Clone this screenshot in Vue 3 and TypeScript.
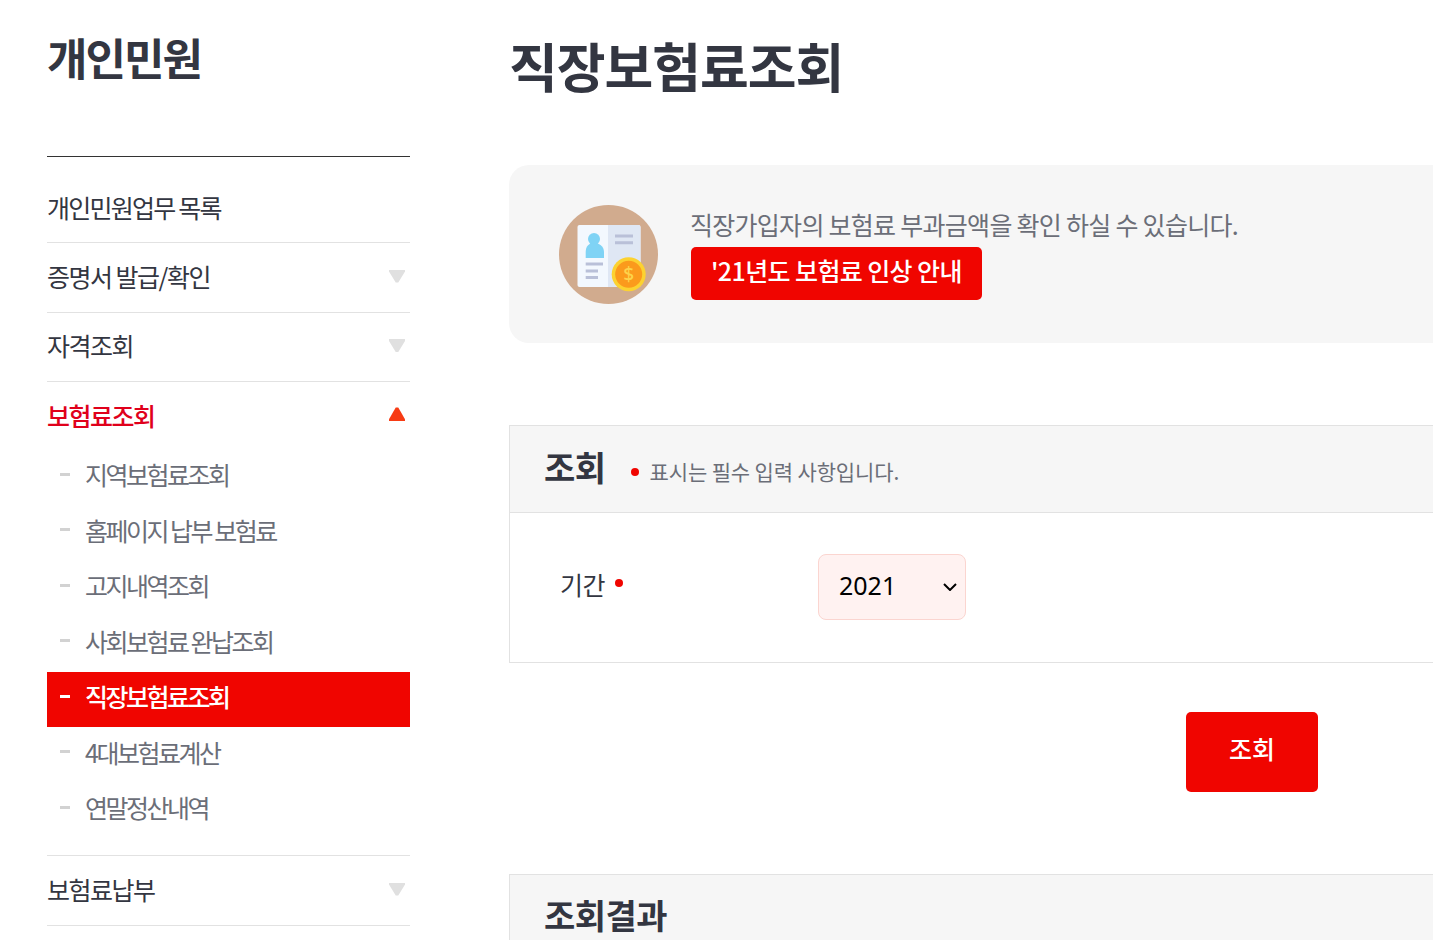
<script setup lang="ts">
type MenuItem = { label: string; arrow?: boolean }

const topItems: MenuItem[] = [
  { label: '개인민원업무 목록' },
  { label: '증명서 발급/확인', arrow: true },
  { label: '자격조회', arrow: true },
]
const subItems = [
  '지역보험료조회',
  '홈페이지 납부 보험료',
  '고지내역조회',
  '사회보험료 완납조회',
  '직장보험료조회',
  '4대보험료계산',
  '연말정산내역',
]
const activeSub = '직장보험료조회'
</script>

<template>
  <div class="page">
    <aside class="side">
      <h2 class="side-title">개인민원</h2>
      <ul class="menu">
        <li v-for="item in topItems" :key="item.label" class="menu-row">
          <span>{{ item.label }}</span>
          <i v-if="item.arrow" class="tri" />
        </li>
        <li class="menu-open">
          <div class="menu-row current">
            <span>보험료조회</span>
            <i class="tri up" />
          </div>
          <ul class="sub">
            <li v-for="s in subItems" :key="s" :class="{ on: s === activeSub }">
              <span class="dash" />{{ s }}
            </li>
          </ul>
        </li>
        <li class="menu-row last">
          <span>보험료납부</span>
          <i class="tri" />
        </li>
      </ul>
    </aside>

    <main class="main">
      <h1 class="title">직장보험료조회</h1>

      <div class="notice">
        <svg class="notice-icon" viewBox="0 0 100 100" width="100" height="100">
          <circle cx="49.500" cy="49.500" r="49.500" fill="#d1ab8e" />
          <rect x="18.500" y="20" width="63" height="62" rx="2" fill="#f3f8fe" />
          <path d="M49 20H79.500a2 2 0 0 1 2 2V80a2 2 0 0 1-2 2H49Z" fill="#dfe7f4" />
          <circle cx="35" cy="34" r="6" fill="#7fd3f5" />
          <path d="M26.700 53V47c0-6 3.500-9 8.300-9s10 3 10 9v6Z" fill="#7fd3f5" />
          <path d="M26.700 59H44M26.700 66H39M26.700 72.500H39" stroke="#b9c0d8" stroke-width="3" />
          <path d="M56 31H74M56 37.700H74" stroke="#b9c0d8" stroke-width="3" />
          <circle cx="69.700" cy="69.300" r="17" fill="#fcd231" />
          <circle cx="69.700" cy="69.300" r="13.500" fill="#fb9a1c" />
          <text x="69.700" y="75.800" text-anchor="middle" class="coin">$</text>
        </svg>
        <div class="notice-body">
          <p class="notice-text">직장가입자의 보험료 부과금액을 확인 하실 수 있습니다.</p>
          <a class="notice-btn">'21년도 보험료 인상 안내</a>
        </div>
      </div>

      <section class="box">
        <header class="box-head">
          <h3>조회</h3>
          <span class="req"><i class="dot" />표시는 필수 입력 사항입니다.</span>
        </header>
        <div class="field">
          <label class="field-label">기간<i class="dot small" /></label>
          <div class="year-wrap">
            <select class="year">
              <option>2021</option>
            </select>
            <svg class="chevron" viewBox="0 0 14 8" width="14" height="8">
              <path d="M1 1l6 6 6-6" fill="none" stroke="#000" stroke-width="2" />
            </svg>
          </div>
        </div>
      </section>

      <div class="actions">
        <button class="search" type="button">조회</button>
      </div>

      <section class="box result">
        <header class="box-head">
          <h3>조회결과</h3>
        </header>
      </section>
    </main>
  </div>
</template>

<style>
html,
body {
  margin: 0;
  overflow: hidden;
}
</style>

<style scoped>
.page {
  display: flex;
  width: 1433px;
  height: 940px;
  overflow: hidden;
  background: #fff;
  color: #333641;
  font-family: "Noto Sans CJK KR", "Noto Sans", sans-serif;
}
ul {
  list-style: none;
  margin: 0;
  padding: 0;
}
.side {
  flex: none;
  width: 363px;
  margin-left: 47px;
}
.side-title {
  margin: 0;
  height: 60px;
  padding-top: 27px;
  padding-bottom: 69px;
  border-bottom: 1px solid #333;
  font-size: 44px;
  line-height: 60px;
  font-weight: 700;
  letter-spacing: -2px;
}
.menu-row {
  display: flex;
  align-items: center;
  justify-content: space-between;
  height: 65px;
  padding-bottom: 4px;
  border-bottom: 1px solid #e2e2e2;
  font-size: 25px;
  letter-spacing: -1.5px;
}
.menu > .menu-row:first-child {
  padding: 17px 0 3px;
  letter-spacing: -1.75px;
}
.menu > .menu-row:nth-child(3) {
  height: 64px;
}
.menu-row.last {
  height: 66px;
  padding-bottom: 3px;
}
.tri {
  width: 16px;
  height: 13px;
  margin: 1px 5px 0 0;
  background: #e0e0e0;
  clip-path: polygon(0 0, 100% 0, 100% 15%, 58% 100%, 42% 100%, 0 15%);
}
.tri.up {
  height: 14px;
  margin-top: -2px;
  background: #f73b14;
  clip-path: polygon(42% 0, 58% 0, 100% 85%, 100% 100%, 0 100%, 0 85%);
}
.menu-open {
  border-bottom: 1px solid #e2e2e2;
  padding-bottom: 16.250px;
}
.menu-row.current {
  border-bottom: 0;
  color: #e0001b;
  font-weight: 500;
  height: 66.750px;
  padding-bottom: 1px;
}
.sub li {
  display: flex;
  align-items: center;
  height: 55.500px;
  padding: 0 0 7px 13px;
  box-sizing: border-box;
  font-size: 25px;
  letter-spacing: -2.5px;
  color: #6b6e78;
}
.sub li.on {
  background: #f00500;
  color: #fff;
  font-weight: 500;
}
.dash {
  width: 10px;
  height: 3px;
  margin-right: 15px;
  background: #d2d2d2;
}
.on .dash {
  background: #fff;
}
.main {
  flex: none;
  width: 1486px;
  margin-left: 99px;
}
.title {
  margin: 0;
  padding-top: 28px;
  height: 135px;
  box-sizing: border-box;
  font-size: 53px;
  line-height: 74px;
  font-weight: 700;
  letter-spacing: -1px;
}
.notice {
  display: flex;
  align-items: center;
  height: 178px;
  margin-top: 30px;
  padding-left: 50px;
  background: #f6f6f6;
  border-radius: 20px;
}
.notice-icon {
  flex: none;
  margin-top: 2px;
}
.coin {
  font: 500 19px "Noto Sans", sans-serif;
  fill: #fdd34a;
}
.notice-body {
  margin-left: 31px;
}
.notice-text {
  margin: 0 0 3px;
  font-size: 25px;
  line-height: 32px;
  padding-bottom: 4px;
  letter-spacing: -0.72px;
  color: #6b6e78;
}
.notice-btn {
  display: inline-block;
  height: 53px;
  margin-left: 1px;
  padding: 0 20px;
  border-radius: 5px;
  background: #f00500;
  color: #fff;
  font-size: 25px;
  font-weight: 500;
  line-height: 46px;
  letter-spacing: -0.6px;
}
.box {
  margin-top: 82px;
  border: 1px solid #e2e2e2;
  border-right: 0;
}
.box-head {
  display: flex;
  align-items: center;
  height: 87px;
  padding-left: 34px;
  box-sizing: border-box;
  background: #f6f6f6;
  border-bottom: 1px solid #e2e2e2;
}
.box-head h3 {
  margin: 0 0 5px;
  font-size: 34px;
  line-height: 80px;
  font-weight: 700;
  letter-spacing: -0.5px;
}
.result h3 {
  margin-bottom: 7px;
}
.req {
  display: inline-flex;
  align-items: center;
  margin-left: 25px;
  margin-top: 4px;
  font-size: 21px;
  letter-spacing: -0.14px;
  color: #6b6e78;
}
.dot {
  display: inline-block;
  flex: none;
  width: 8px;
  height: 8px;
  margin: 2px 11px 0 0;
  border-radius: 50%;
  background: #f00500;
}
.dot.small {
  margin: 0 0 2px 10px;
}
.field {
  display: flex;
  align-items: center;
  height: 149px;
  padding-left: 50px;
}
.field-label {
  display: flex;
  align-items: center;
  width: 258px;
  margin-bottom: 8px;
  font-size: 25px;
  letter-spacing: -0.5px;
}
.year-wrap {
  position: relative;
  margin-bottom: 2px;
}
.year {
  display: block;
  width: 148px;
  height: 66px;
  padding: 0 14px 3px 20px;
  border: 1px solid #fbd5d0;
  border-radius: 8px;
  background: #fff2f1;
  color: #000;
  font-family: "Noto Sans", sans-serif;
  font-size: 25px;
  appearance: none;
}
.chevron {
  position: absolute;
  top: 29px;
  right: 9px;
  pointer-events: none;
}
.actions {
  display: flex;
  justify-content: center;
  margin-top: 49px;
}
.search {
  width: 132px;
  height: 80px;
  border: 0;
  border-radius: 5px;
  background: #f00500;
  color: #fff;
  font-family: inherit;
  font-size: 25px;
  font-weight: 500;
  padding-bottom: 10px;
}
.result {
  margin-top: 82px;
}
</style>
